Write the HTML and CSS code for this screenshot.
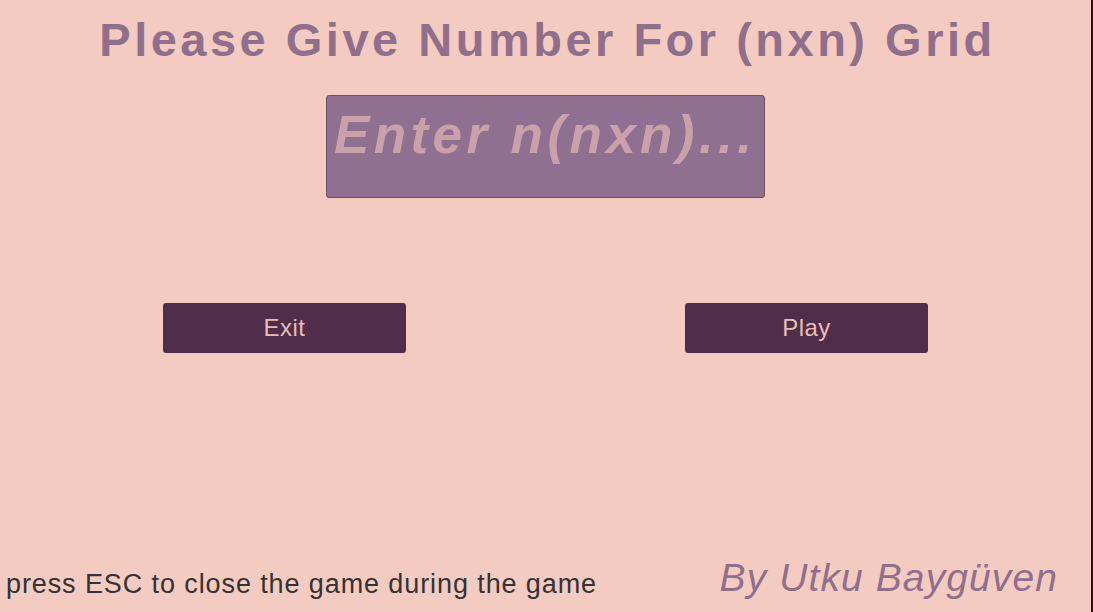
FILE: index.html
```html
<!DOCTYPE html>
<html lang="en">
<head>
<meta charset="utf-8">
<title>Grid Menu</title>
<link rel="stylesheet" href="styles.css">
</head>
<body>
<div class="screen">
  <h1 class="title">Please Give Number For (nxn) Grid</h1>
  <input class="grid-input" type="text" placeholder="Enter n(nxn)...">
  <div class="actions">
    <button class="btn">Exit</button>
    <button class="btn">Play</button>
  </div>
  <div class="footer">
    <span class="hint">press ESC to close the game during the game</span>
    <span class="credit">By Utku Baygüven</span>
  </div>
</div>
<div class="edge"></div>
</body>
</html>
```

FILE: styles.css
```css
html, body {
  margin: 0;
  padding: 0;
}
body {
  width: 1093px;
  height: 612px;
  display: flex;
  overflow: hidden;
  font-family: "Liberation Sans", Arial, sans-serif;
}
.screen {
  flex: 1;
  background: #f4cbc0;
  display: flex;
  flex-direction: column;
  align-items: center;
}
.edge {
  width: 2px;
  background: #1c1a1c;
}
.title {
  margin: 0;
  padding-top: 16px;
  padding-left: 4px;
  font-size: 47px;
  line-height: 47px;
  font-weight: bold;
  letter-spacing: 3.5px;
  color: #906f8d;
  white-space: nowrap;
}
.grid-input {
  box-sizing: border-box;
  margin-top: 32px;
  width: 439px;
  height: 103px;
  padding: 9px 7px 33px 7px;
  background: #907090;
  border: 1px solid #6f5069;
  border-radius: 3px;
  font-family: "Liberation Sans", Arial, sans-serif;
  font-size: 53px;
  font-weight: bold;
  font-style: italic;
  letter-spacing: 4.4px;
  color: #c9a2a9;
  outline: none;
}
.grid-input::placeholder {
  color: #c9a2a9;
  opacity: 1;
}
.actions {
  margin-top: 105px;
  width: 765px;
  display: flex;
  justify-content: space-between;
}
.btn {
  width: 243px;
  height: 50px;
  background: #4f2d4b;
  border: none;
  border-radius: 3px;
  color: #e9bdb5;
  font-family: "Liberation Sans", Arial, sans-serif;
  font-size: 24px;
  letter-spacing: 0.5px;
  padding: 0;
}
.footer {
  margin-top: auto;
  align-self: stretch;
  display: flex;
  justify-content: space-between;
  align-items: flex-end;
  padding: 0 33px 14px 6px;
}
.hint {
  font-size: 27px;
  line-height: 1;
  letter-spacing: 0.9px;
  color: #333333;
}
.credit {
  margin-bottom: 1px;
  font-size: 39px;
  line-height: 1;
  letter-spacing: 1.1px;
  font-style: italic;
  color: #906f8d;
}
```
